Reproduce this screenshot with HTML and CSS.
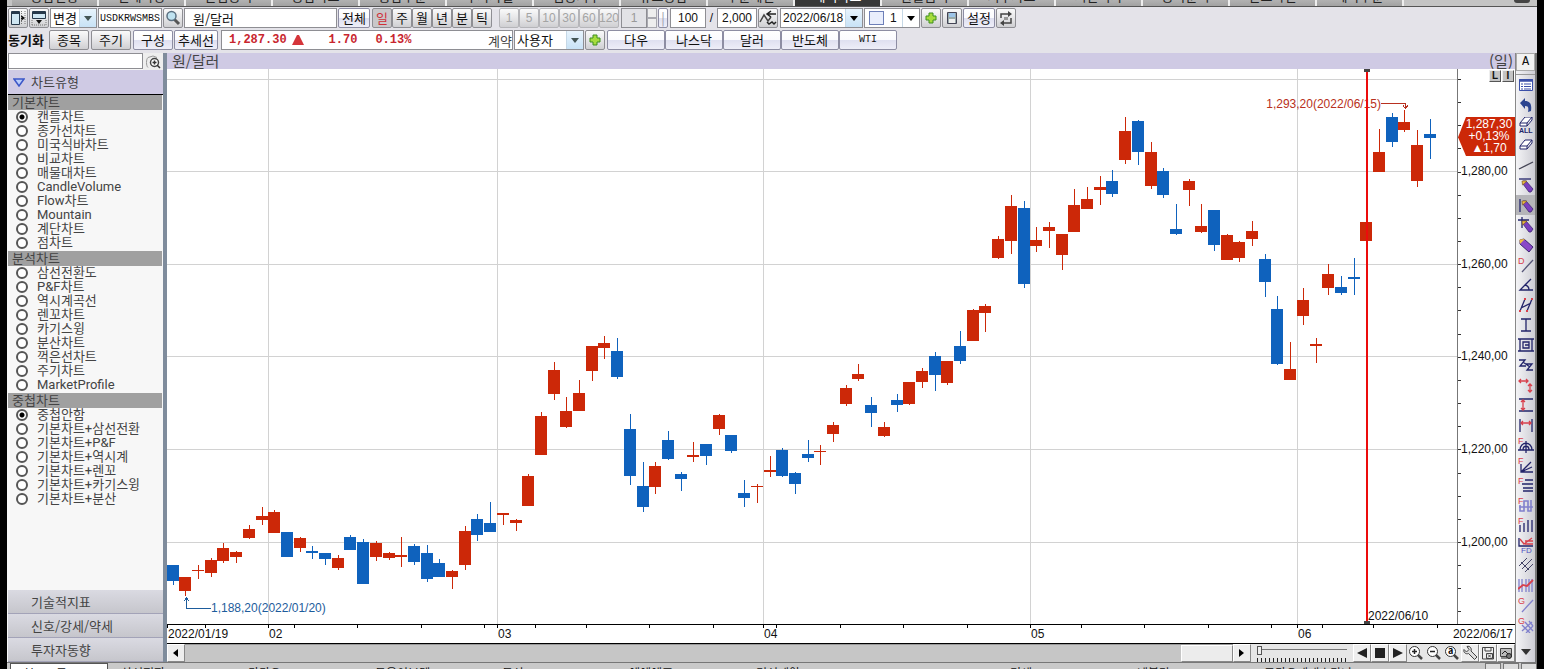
FILE: index.html
```html
<!DOCTYPE html>
<html lang="ko">
<head>
<meta charset="utf-8">
<title>원/달러 차트</title>
<link rel="stylesheet" href="styles.css">
</head>
<body>
<div class="app">
  <nav class="tabs" aria-label="화면">
    <a href="#">종합현황</a><a href="#">현재가창</a><a href="#">관심종목</a><a href="#">종합차트</a><a href="#">통합주문</a><a href="#">투자자별</a><a href="#">업종지수</a><a href="#">뉴스종합</a><a href="#">주문체결</a><a href="#" class="on">해외차트</a><a href="#">환율금리</a><a href="#">지수차트</a><a href="#">시간외가</a><a href="#">종목분석</a><a href="#">잔고확인</a><a href="#">예약주문</a><span class="winbtn"></span>
  </nav>

  <header class="toolbar">
    <div class="row">
      <button class="btn sq" aria-label="왼쪽 패널"><svg width="16" height="16" viewBox="0 0 16 16"><path d="M1.5 1.5h8v13h-8z" fill="#cfe6f2" stroke="#26384a"/><path d="M2 3h7" stroke="#26384a" stroke-width="2"/><path d="M11 5l4 3-4 3z" fill="#111"/><path d="M11.500 1v14M15 1v14" stroke="#777" stroke-dasharray="1 1"/></svg></button>
      <button class="btn sq" aria-label="아래 패널"><svg width="16" height="16" viewBox="0 0 16 16"><path d="M1.500 1.500h13v7h-13z" fill="#cfe6f2" stroke="#26384a"/><path d="M2 3h12" stroke="#26384a" stroke-width="2"/><path d="M5 10h6l-3 4z" fill="#111"/><path d="M1 15h14M1 10v5M15 10v5" stroke="#777" stroke-dasharray="1 1"/></svg></button>
      <span class="sel w48"><select aria-label="변경"><option>변경</option></select><span class="arr"></span></span>
      <input class="box code" aria-label="종목코드" value="USDKRWSMBS">
      <button class="btn sq" aria-label="검색"><svg width="16" height="16" viewBox="0 0 16 16"><path d="M9 9l5 5" stroke="#555" stroke-width="3"/><circle cx="6.500" cy="6" r="4.500" fill="#bfe2f0" stroke="#5a6f80" stroke-width="1.500"/></svg></button>
      <input class="box name" aria-label="종목명" value="원/달러">
      <button class="btn lav w32">전체</button>
      <span class="group g"><button class="btn on">일</button><button class="btn">주</button><button class="btn">월</button><button class="btn">년</button><button class="btn">분</button><button class="btn">틱</button></span>
      <span class="group off"><button class="btn" disabled>1</button><button class="btn" disabled>5</button><button class="btn" disabled>10</button><button class="btn" disabled>30</button><button class="btn" disabled>60</button><button class="btn" disabled>120</button><input class="box spin" aria-label="간격" value="1" disabled><span class="updown"><i></i><i></i></span></span>
      <button class="btn lav tiny" disabled>|</button>
      <input class="box w36" aria-label="표시 개수" value="100">
      <span class="slash">/</span>
      <input class="box w40" aria-label="전체 개수" value="2,000">
      <button class="btn sq move" aria-label="차트 이동"><svg width="18" height="16" viewBox="0 0 18 16"><path d="M1 12l4-7 4 6 3-4" fill="none" stroke="#444" stroke-width="1.500"/><path d="M17 4H9M12 1L8 4l4 3M8 12l2 2 3-2 2 2 2-2" fill="none" stroke="#222" stroke-width="1.500"/></svg></button>
      <span class="sel w84"><select aria-label="날짜"><option>2022/06/18</option></select><span class="arr k"></span></span>
      <span class="sel w56"><span class="chip"></span><select aria-label="창 번호"><option>1</option></select><span class="arr k plain"></span></span>
      <button class="btn sq" aria-label="추가"><svg width="14" height="14" viewBox="0 0 14 14"><path d="M5 2h4v3h3v4H9v3H5V9H2V5h3z" fill="#a6dc3c" stroke="#3f8f1e"/></svg></button>
      <button class="btn sq" aria-label="저장"><svg width="14" height="14" viewBox="0 0 14 14"><path d="M2.500 1.500h9v11h-9z" fill="#9aa" stroke="#445"/><path d="M4 2h6v4H4z" fill="#9cc4e8"/><path d="M4 8h6v4H4z" fill="#eee"/></svg></button>
      <button class="btn lav w32">설정</button>
      <button class="btn sq" aria-label="새로고침"><svg width="16" height="16" viewBox="0 0 16 16"><path d="M3 8V4h8M13 8v5H5" fill="none" stroke="#444" stroke-width="1.500"/><path d="M10 1l4 3-4 3zM6 10l-4 3 4 3z" fill="#444"/><path d="M6 7h4v3H6z" fill="#999"/></svg></button>
    </div>
    <div class="row">
      <b class="sync">동기화</b>
      <button class="btn w40 gray">종목</button>
      <button class="btn w40 gray">주기</button>
      <button class="btn lav w40">구성</button>
      <button class="btn lav w44">추세선</button>
      <div class="quote"><b>1,287.30</b><i class="up"></i><b class="q2">1.70</b><b class="q3">0.13%</b><span>계약</span></div>
      <span class="sel w70"><select aria-label="사용자"><option>사용자</option></select><span class="arr"></span></span>
      <button class="btn sq" aria-label="계약 추가"><svg width="14" height="14" viewBox="0 0 14 14"><path d="M5 2h4v3h3v4H9v3H5V9H2V5h3z" fill="#a6dc3c" stroke="#3f8f1e"/></svg></button>
      <span class="group links"><button class="btn lav">다우</button><button class="btn lav">나스닥</button><button class="btn lav">달러</button><button class="btn lav">반도체</button><button class="btn lav code">WTI</button></span>
    </div>
  </header>

  <main class="main">
    <aside class="side">
      <div class="find"><input class="box" aria-label="지표 찾기"><button aria-label="찾기"><svg width="16" height="14" viewBox="0 0 16 14"><path d="M3 12.500C1 11 1 4 3 2.500L8 1l4 1.500" fill="none" stroke="#999"/><circle cx="9.500" cy="7.500" r="4" fill="#fff" stroke="#444" stroke-width="1.500"/><path d="M7.500 7.500h4M9.500 5.500v4M12 10l3 3" stroke="#333" stroke-width="1.500"/></svg></button></div>
      <h2 class="sec"><svg width="12" height="9" viewBox="0 0 12 9"><path d="M1 1h10L6 8z" fill="#b9cdfa" stroke="#3c57c8" stroke-width="1.500"/></svg>차트유형</h2>
      <div class="lists">
        <h3>기본차트</h3>
        <label><input type="radio" name="a" checked>캔들차트</label>
        <label><input type="radio" name="a">종가선차트</label>
        <label><input type="radio" name="a">미국식바차트</label>
        <label><input type="radio" name="a">비교차트</label>
        <label><input type="radio" name="a">매물대차트</label>
        <label><input type="radio" name="a">CandleVolume</label>
        <label><input type="radio" name="a">Flow차트</label>
        <label><input type="radio" name="a">Mountain</label>
        <label><input type="radio" name="a">계단차트</label>
        <label><input type="radio" name="a">점차트</label>
        <h3>분석차트</h3>
        <label><input type="radio" name="a">삼선전환도</label>
        <label><input type="radio" name="a">P&amp;F차트</label>
        <label><input type="radio" name="a">역시계곡선</label>
        <label><input type="radio" name="a">렌꼬차트</label>
        <label><input type="radio" name="a">카기스윙</label>
        <label><input type="radio" name="a">분산차트</label>
        <label><input type="radio" name="a">꺽은선차트</label>
        <label><input type="radio" name="a">주기차트</label>
        <label><input type="radio" name="a">MarketProfile</label>
        <h3>중첩차트</h3>
        <label><input type="radio" name="b" checked>중첩안함</label>
        <label><input type="radio" name="b">기본차트+삼선전환</label>
        <label><input type="radio" name="b">기본차트+P&amp;F</label>
        <label><input type="radio" name="b">기본차트+역시계</label>
        <label><input type="radio" name="b">기본차트+렌꼬</label>
        <label><input type="radio" name="b">기본차트+카기스윙</label>
        <label><input type="radio" name="b">기본차트+분산</label>
      </div>
      <button class="acc">기술적지표</button>
      <button class="acc">신호/강세/약세</button>
      <button class="acc">투자자동향</button>
    </aside>

    <section class="work">
      <div class="title"><span>원/달러</span><span>(일)</span></div>
      <div class="chart">
        <div class="plot" id="plot">
          <svg id="candles" width="100%" height="100%" viewBox="167 69 1290 555" preserveAspectRatio="none" shape-rendering="crispEdges"></svg>
        </div>
        <div class="price" id="price">
          <div class="li"><button>L</button><button>I</button></div>
          <div class="flag" id="flag"><span>1,287,30</span><span>+0,13%</span><span>▲1,70</span></div>
        </div>
      </div>
      <div class="dates" id="dates"><span class="last">2022/06/17</span></div>
      <div class="scroll">
        <button class="sb" aria-label="이전"><svg width="6" height="8"><path d="M5 0v8L0 4z"/></svg></button>
        <div class="track"><div class="thumb"></div></div>
        <button class="sb" aria-label="다음"><svg width="6" height="8"><path d="M0 0v8l5-4z"/></svg></button>
        <div class="zoomer"><input type="range" aria-label="확대" value="0" min="0" max="100"><div class="marks"></div></div>
        <button class="sb" aria-label="뒤로"><svg width="12" height="12"><path d="M11 1v10L1 6z" fill="#222"/></svg></button>
        <button class="sb" aria-label="정지"><svg width="12" height="12"><path d="M1 1h10v10H1z" fill="#222"/></svg></button>
        <button class="sb" aria-label="재생"><svg width="12" height="12"><path d="M1 1v10l10-5z" fill="#222"/></svg></button>
        <button class="fl" aria-label="확대"><svg width="16" height="16" viewBox="0 0 16 16"><circle cx="6.500" cy="6.500" r="5" fill="#fff" stroke="#333"/><path d="M4 6.500h5M6.500 4v5" stroke="#222" stroke-width="1.500"/><path d="M10 10l4 4" stroke="#444" stroke-width="2.500"/></svg></button>
        <button class="fl" aria-label="축소"><svg width="16" height="16" viewBox="0 0 16 16"><circle cx="6.500" cy="6.500" r="5" fill="#fff" stroke="#333"/><path d="M4 6.500h5" stroke="#222" stroke-width="1.500"/><path d="M10 10l4 4" stroke="#444" stroke-width="2.500"/></svg></button>
        <button class="fl" aria-label="자동"><svg width="16" height="16" viewBox="0 0 16 16"><circle cx="6.500" cy="6.500" r="5" fill="#fff" stroke="#333"/><text x="4" y="9" font-size="9" font-weight="700">a</text><path d="M10 10l4 4" stroke="#444" stroke-width="2.500"/></svg></button>
        <button class="sb" aria-label="도구"><svg width="16" height="16" viewBox="0 0 16 16"><path d="M5 1.500c3-1 5 2 4 4.500l6 6-2.500 2.500-6-6C4 9.500 1 7.500 2 4.500L4.500 7l2.500-2.500z" fill="#ddd" stroke="#444"/></svg></button>
        <button class="sb" aria-label="저장"><svg width="14" height="14" viewBox="0 0 14 14"><path d="M1.500 13V1.500h11V13zM4 2v3h6V2M5.500 7.500h6v5h-6zM7 8.500l3 3M10 8.500l-3 3" fill="none" stroke="#444"/></svg></button>
        <button class="sb" aria-label="인쇄"><svg width="14" height="14" viewBox="0 0 14 14"><path d="M1.500 2.500h11v8h-11z" fill="#bbb" stroke="#444"/><path d="M3 8l3-3 3 3M2 12h6" stroke="#222" fill="none"/><circle cx="10" cy="10" r="2.500" fill="#777" stroke="#222"/></svg></button>
      </div>
    </section>

    <aside class="tools">
      <button class="a">A</button>
      <div class="strip" id="strip"></div>
      <button class="more" aria-label="더보기"><svg width="10" height="6"><path d="M0 0h10L5 6z" fill="#333"/></svg></button>
    </aside>
  </main>

  <footer class="foot">
    <span class="fsel">현종목록</span>
    <a href="#">삼성전자</a><a href="#">카카오</a><a href="#">두올이브텍</a><a href="#">두산</a><a href="#">에에에프</a><a href="#">경신제약</a><a href="#">88</a><a href="#">기세</a><a href="#">넥블라</a><a href="#">코카오게대호타나</a>
    <span class="fend"><i></i><i></i><i></i></span>
  </footer>
</div>
<script src="chart.js"></script>
</body>
</html>
```
FILE: styles.css
```css
* { box-sizing: border-box; }
html, body { height: 100%; }
body { margin: 0; padding: 0 7px; background: #000; overflow: hidden; color: #111;
  font: 13px/16px "Noto Sans CJK KR", sans-serif; }
button, input, select { font: inherit; color: inherit; margin: 0; padding: 0; border-radius: 0; }
a { color: inherit; text-decoration: none; }
svg { display: block; flex: none; }
.app { height: 100%; display: flex; flex-direction: column; background: #e4e3e9; }

.tabs { height: 7px; flex: none; display: flex; align-items: flex-end; overflow: hidden; background: #c4c4c4; border-bottom: 1px solid #555; padding-left: 5px; }
.tabs a { width: 87px; flex: none; height: 16px; line-height: 12px; text-align: center; color: #222; background: linear-gradient(#ccc, #a2a2a2); border-right: 2px solid #eee; }
.tabs a.on { background: #383838; color: #fff; }
.winbtn { width: 16px; height: 12px; margin: 0 7px 3px auto; background: #444; border-radius: 3px; }

.toolbar { flex: none; height: 46px; padding: 1px 0 2px 1px; display: flex; flex-direction: column; gap: 2px; }
.row { display: flex; gap: 1px; height: 20px; align-items: stretch; white-space: nowrap; }
.btn { height: 20px; border: 1px solid #8e8e93; border-radius: 2px; background: linear-gradient(#fafafa, #e6e6e8 50%, #cfcfd2); display: flex; align-items: center; justify-content: center; flex: none; line-height: 18px; }
.btn.lav { background: linear-gradient(#fff, #fbfbfe 50%, #dfe0f0 51%, #eeeef8); border-color: #8d8da3; }
.sq { width: 20px; }
.move { margin-right: 1px; }
.gray { margin-right: 1px; }
.box { border: 1px solid #8e8e93; background: #fff; height: 20px; padding: 0 3px; min-width: 0; }
.row .box { flex: none; font-family: "Liberation Sans", "Noto Sans CJK KR", sans-serif; font-size: 12px; }
.row .code { font-family: "Liberation Mono", monospace; font-size: 10px; }
.row .box.code { width: 64px; padding: 0 1px; }
.row .box.name { width: 153px; padding-left: 8px; font: 13px "Noto Sans CJK KR", sans-serif; }
.w32 { width: 32px; }
.w36 { width: 36px; text-align: center; }
.w40 { width: 40px; text-align: center; }
.w44 { width: 44px; }
.w48 { width: 47px; }
.w56 { width: 56px; }
.w70 { width: 70px; }
.w84 { width: 83px; }
.sel { display: flex; flex: none; height: 20px; background: #fff; border: 1px solid #8e8e93; align-items: center; }
.sel select { appearance: none; border: 0; background: none; flex: 1; min-width: 0; height: 18px; padding-left: 2px; }
.w84 select { font: 12px "Liberation Sans", sans-serif; }
.w56 select { font: 12px "Liberation Sans", sans-serif; padding-left: 6px; }
.arr { width: 17px; height: 18px; flex: none; background: linear-gradient(#e8f4fd, #c8e2f6); display: grid; place-items: center; border-left: 1px solid #c6d8e6; }
.arr::before { content: ""; border: 4px solid transparent; border-top: 5px solid #455; border-bottom: 0; }
.arr.k::before { border-top-color: #000; }
.arr.plain { background: #fff; }
.chip { width: 15px; height: 14px; margin-left: 4px; border: 1px solid #6d7fb8; background: #e9eefc; flex: none; }
.group { display: flex; flex: none; }
.g { margin-left: 1px; }
.g .btn { width: 20px; }
.g .on { background: #c9c7c9; color: #d03038; }
.off { margin-left: 6px; }
.off .btn { width: 20px; font: 12px "Liberation Sans", sans-serif; color: #a4a4a4; border-color: #b5b5b9; }
.row .spin { width: 26px; background: #e2e2e6; color: #999; text-align: center; margin-left: 2px; }
.updown { width: 10px; display: flex; flex-direction: column; }
.updown i { flex: 1; border: 1px solid #a9a9b0; background: #eee; }
.btn.tiny { width: 10px; color: #99a; margin-right: 1px; }
.slash { width: 9px; text-align: center; font: 12px/20px "Liberation Sans", sans-serif; }
.sync { width: 40px; line-height: 20px; }
.quote { width: 292px; margin-left: 2px; flex: none; display: flex; align-items: center; background: #fff; border: 1px solid #8e8e93; padding-left: 7px; color: #c8262e; font: 12px "Liberation Mono", monospace; }
.up { width: 12px; margin-left: 5px; border: 5px solid transparent; border-top: 0; border-bottom: 10px solid #d5353a; }
.q2 { margin-left: 25px; }
.q3 { margin-left: 18px; }
.quote span { margin-left: auto; color: #444; font: 13px "Noto Sans CJK KR", sans-serif; }
.links { margin-left: 1px; }
.links .btn { width: 58px; }

.main { flex: 1; min-height: 0; display: flex; }
.side { width: 160px; flex: none; display: flex; flex-direction: column; background: #f7f7f7; border-right: 4px solid #7f8c9c; padding-left: 1px; color: #444; }
.find { display: flex; height: 17px; flex: none; }
.find .box { flex: 1; height: 16px; }
.find button { border: 0; background: #eee; width: 20px; display: grid; place-items: center; }
.sec { margin: 0; height: 25px; flex: none; display: flex; align-items: center; gap: 6px; padding-left: 5px; background: #cfcae4; border-bottom: 1px solid #000; font-size: 13px; font-weight: 400; }
.lists { flex: 1; min-height: 0; overflow: hidden; }
.lists h3 { margin: 0 1px 0 0; height: 15px; line-height: 14px; padding-left: 4px; font-size: 13px; font-weight: 400; background: #a0a0a0; }
.lists label + h3 { margin-top: 1px; }
.lists label { display: flex; align-items: center; gap: 9px; height: 14px; padding-left: 8px; font: 13px/14px Roboto, "Noto Sans CJK KR", sans-serif; }
.lists input { appearance: none; width: 12px; height: 12px; border: 2px solid #555; border-radius: 50%; background: #fff; flex: none; }
.lists input:checked { background: radial-gradient(#000 0 2px, #fff 3px); }
.acc { flex: none; height: 24px; border: 0; border-bottom: 1px solid #a3a3b8; padding-left: 23px; text-align: left; background: linear-gradient(#dadae2, #c6c6cc); }

.work { flex: 1; min-width: 0; display: flex; flex-direction: column; background: #fff; }
.title { height: 16px; flex: none; display: flex; justify-content: space-between; padding: 0 2px 0 5px; background: #cfcae4; font-size: 15px; line-height: 15px; color: #444; }
.chart { flex: 1; min-height: 0; display: flex; }
.plot { flex: 1; min-width: 0; position: relative; border-right: 1px solid #777; }
.price { width: 57px; flex: none; position: relative; font: 12px/14px "Liberation Sans", sans-serif; }
.tick { position: absolute; left: 0; width: 3px; height: 1px; background: #333; }
.lab { position: absolute; left: 3px; margin-top: -7px; }
.li { display: flex; justify-content: flex-end; padding: 1px 1px 0 0; gap: 1px; }
.li button { width: 12px; height: 12px; border: 1px solid #555; border-top-color: #eee; border-left-color: #eee; background: #c4c4c4; font: bold 10px/10px "Liberation Sans", sans-serif; }
.flag { position: absolute; left: 0; right: 0; height: 39px; margin-top: -20px; padding: 1px 0 0 5px; display: flex; flex-direction: column; align-items: center; line-height: 12px; color: #fff; background: #cc2808; clip-path: polygon(0 52%, 8px 0, 100% 0, 100% 100%, 8px 100%); }
.note { position: absolute; margin-top: -7px; white-space: nowrap; font: 12px/14px "Liberation Sans", sans-serif; }
.note.red { color: #b83020; transform: translateX(-100%); }
.note.blue { color: #1d5c9c; }
.cursor { position: absolute; top: 0; bottom: 0; width: 2px; background: #ec0c0c; }
.cursor::before, .cursor::after { content: ""; position: absolute; left: -2px; width: 6px; height: 3px; background: #444; }
.cursor::after { bottom: 0; }
.dates { height: 20px; flex: none; position: relative; border-top: 1px solid #000; border-bottom: 1px solid #000; font: 12px/14px "Liberation Sans", sans-serif; }
.dates i { position: absolute; top: 0; width: 1px; height: 3px; background: #000; }
.dates span { position: absolute; top: 2px; }
.dates .last { right: 2px; }
.scroll { height: 18px; flex: none; display: flex; background: #e6e6e6; }
.sb, .fl { width: 18px; flex: none; display: grid; place-items: center; border: 1px solid #888; border-top-color: #fff; border-left-color: #fff; background: #eee; }
.fl { border: 0; background: none; }
.track { flex: 1; display: flex; justify-content: flex-end; background: #c6c6c6; border-top: 1px solid #999; }
.thumb { width: 52px; background: #ececec; border: 1px solid #888; border-top-color: #fff; border-left-color: #fff; }
.zoomer { width: 102px; flex: none; padding: 2px 6px 0 6px; display: flex; flex-direction: column; justify-content: space-between; }
.zoomer input { appearance: none; width: 100%; height: 9px; background: linear-gradient(#777, #777) 0 3px / 100% 1px no-repeat; }
.zoomer input::-webkit-slider-thumb { appearance: none; width: 5px; height: 9px; background: #eee; border: 1px solid #555; }
.marks { height: 4px; background: repeating-linear-gradient(90deg, #222 0 1px, transparent 1px 4px); }

.tools { width: 22px; flex: none; border-left: 1px solid #888; border-right: 2px solid #777; background: linear-gradient(90deg, #f4f4f6, #cdcdd4); display: flex; flex-direction: column; }
.tools button { border: 0; background: none; display: grid; place-items: center; flex: none; }
.tools .a { height: 18px; margin-bottom: 3px; border: 1px solid #aaa; background: #f2f2f2; font: 12px "Liberation Mono", monospace; }
.strip { flex: 1; min-height: 0; overflow: hidden; display: flex; flex-direction: column; border-top: 1px solid #999; }
.strip button { height: 20px; }
.strip .on { background: #b5b5b9; }
.tools .more { height: 20px; }

.foot { height: 7px; flex: none; overflow: hidden; display: flex; align-items: flex-start; background: #c9c9c9; border-top: 1px solid #777; padding-left: 3px; color: #111; font-size: 12px; line-height: 20px; }
.fsel { width: 98px; height: 20px; flex: none; margin-right: 13px; padding-left: 12px; border: 1px solid #555; background: #fff; }
.foot a { width: 127px; flex: none; }
.fend { margin-left: auto; display: flex; gap: 2px; }
.fend i { width: 16px; height: 16px; border: 1px solid #777; background: #ddd; }
```
FILE: chart.js
```js
// One row per session: direction, body top, body bottom, wick top, wick bottom.
const data = `b565,581,565,585 r577,591,577,596 r570,571,565,579 r560,573,558,577 r548,561,543,563 r552,557,551,563 r529,538,525,539 r516,520,507,525 r512,533,510,533 b532,557,532,557
r538,548,537,552 b551,553,546,559 b553,559,553,565 r558,568,555,570 b537,550,535,550 b542,584,539,584 r543,557,541,561 r553,558,552,560 r555,557,537,567 b546,562,544,565
b553,579,545,582 b563,577,559,577 r571,577,570,589 r531,565,526,570 b519,535,514,541 b523,532,502,532 r513,515,513,525 r520,523,519,531 r476,506,474,506 r416,455,412,455
r370,394,362,400 r411,427,397,428 r393,411,380,411 r346,371,346,381 r343,348,336,359 b351,377,338,379 b429,476,414,485 b486,507,462,512 r466,487,462,494 b440,459,431,460
b474,479,472,491 r455,457,442,462 b444,456,444,465 r415,429,414,435 b435,451,435,453 b493,498,480,507 r486,487,484,503 r470,472,456,477 b450,476,448,477 b473,484,472,494
b454,458,440,462 r451,452,445,465 r425,434,422,442 r388,404,385,406 r374,379,364,381 b405,413,397,427 r427,436,422,437 b400,405,394,412 r382,404,382,405 r371,382,368,388
b356,375,352,391 r361,383,361,385 b346,361,331,364 r310,341,309,341 r306,313,304,332 r239,258,236,259 r206,241,195,254 b208,284,201,288 r240,246,227,252 r227,231,222,248
r234,255,234,270 r205,232,189,232 r199,209,187,209 r187,190,176,205 b181,194,170,197 r131,160,117,164 b121,152,120,165 r152,186,142,189 b171,195,168,198 b229,234,204,235
r181,190,179,206 r226,232,204,233 b210,245,210,251 r235,260,234,260 r242,258,241,262 r231,239,221,246 b259,282,254,297 b309,364,296,365 r369,380,342,380 r300,316,288,325
r344,346,338,363 r274,288,264,295 b287,293,276,295 b277,279,258,295 r222,241,222,241 r152,172,129,172 b117,142,113,147 r122,130,110,132 r145,181,130,187 b134,138,119,159`.split(/\s+/);

const X0 = 167, Y0 = 69, W = 1290, H = 555;
const px = x => (x - X0) / W * 100 + '%';
const py = y => (y - Y0) / H * 100 + '%';
const rect = (x, y, w, h, c) => `<rect x="${x}" y="${y}" width="${w}" height="${h}" fill="${c}"/>`;
const months = [[268, '02'], [497, '03'], [763, '04'], [1030, '05'], [1297, '06']];
const prices = [[171, '1,280,00'], [264, '1,260,00'], [356, '1,240,00'], [449, '1,220,00'], [542, '1,200,00']];

let out = rect(X0, 79, W, 1, '#d2d2d2');
prices.forEach(p => out += rect(X0, p[0], W, 1, '#d2d2d2'));
months.forEach(m => out += rect(m[0], Y0, 1, H, '#d2d2d2'));
data.forEach((row, i) => {
  const color = row[0] === 'r' ? '#cc2808' : '#0f62bd';
  const [top, bottom, high, low] = row.slice(1).split(',').map(Number);
  const x = Math.round(172.6 + i * 12.7);
  out += rect(x, high, 1, low - high, color) + rect(x - 6, top, 12, bottom - top, color);
});
out += '<path d="M186.500 598v10H211M184 601l2.500-3 2.500 3" fill="none" stroke="#1d5c9c"/>';
out += '<path d="M1381 103.500h24.500v5M1403 105.500l2.500 3 2.500-3" fill="none" stroke="#b83020"/>';
document.getElementById('candles').innerHTML = out;

document.getElementById('plot').insertAdjacentHTML('beforeend',
  `<span class="note blue" style="left:${px(211)};top:${py(608)}">1,188,20(2022/01/20)</span>
   <span class="note red" style="left:${px(1381)};top:${py(104)}">1,293,20(2022/06/15)</span>
   <span class="note" style="left:${px(1368)};top:${py(616)}">2022/06/10</span>
   <div class="cursor" style="left:${px(1366)}"></div>`);

let axis = '';
for (let k = 0; k < 24; k++) axis += `<i class="tick" style="top:${py(79 + k * 23.15)}"></i>`;
prices.forEach(p => axis += `<span class="lab" style="top:${py(p[0])}">${p[1]}</span>`);
document.getElementById('price').insertAdjacentHTML('beforeend', axis);
document.getElementById('flag').style.top = py(137);

// The date axis is wider than the plot by the price column.
const dx = x => (x - X0) / (W + 58) * 100 + '%';
let dates = `<span style="left:${dx(168)}">2022/01/19</span>`;
[167, 205, 268, 294, 357, 421, 484, 497, 535, 586, 649, 713, 763, 776, 840, 903, 967, 1030, 1081, 1144, 1208, 1271, 1297, 1322, 1373, 1437]
  .forEach(x => dates += `<i style="left:${dx(x)}"></i>`);
months.forEach(m => dates += `<span style="left:${dx(m[0] + 1)}">${m[1]}</span>`);
document.getElementById('dates').insertAdjacentHTML('beforeend', dates);

const N = '#22246a', R = '#d8404c', B = '#8080cc';
const line = (d, c = N, w = 1.3) => `<path d="${d}" fill="none" stroke="${c}" stroke-width="${w}"/>`;
const letter = (t, x = 0, y = 7) => `<text x="${x}" y="${y}" font-size="9" font-family="Liberation Sans" fill="${R}">${t}</text>`;
const pencil = '<path d="M5 4h3l7 8-2 3h-2L5 7z" fill="#7a3fc0" stroke="#3c2470" stroke-width=".8"/><path d="M4 4h5L4.500 8z" fill="#f0c040" stroke="#705020" stroke-width=".6"/>';
const eraser = y => `<path d="M2 ${y + 6}l5-6h7l-5 6zM2 ${y + 6}v3h7v-3M9 ${y + 9}l5-6v-3" fill="#fff" stroke="${N}"/>`;
const icons = [
  ['목록', '<path d="M1.500 2.500h13v11h-13z" fill="#fff" stroke="#3a4fa8"/><path d="M1 3.500h14" stroke="#3a4fa8" stroke-width="2.500"/>' + line('M3 7h2M6 7h7M3 9.500h2M6 9.500h7M3 12h2M6 12h7', '#3a4fa8', 1)],
  ['되돌리기', '<path d="M2 6l5-5v3c5 0 7 3 6 10l-3 1c1-5 0-6-3-6v3z" fill="#2c4590"/>'],
  ['전체 지우기', eraser(0) + `<text x="1" y="16" font-size="7" font-weight="700" font-family="Liberation Sans" fill="${N}">ALL</text>`],
  ['지우기', eraser(3)],
  ['추세선', line('M1 12L15 5', '#445')],
  ['수평선', line('M1 2h12') + pencil],
  ['수직선', line('M2 2v13') + pencil],
  ['십자선', line('M4 0v11M0 3h11') + pencil],
  ['색연필', '<path d="M2 3l4-1 9 8-4 5-9-8z" fill="#8a48c8" stroke="#3c2470"/><path d="M1.500 2.500L7 2 2 7z" fill="#f0c040"/>'],
  ['D선', letter('D') + line('M4 15L15 3', '#557')],
  ['각도', line('M13 2L2 13h13M7 8q4 1 4 5')],
  ['채널', line('M2 14L7 2M9 14l5-12M3 11l10-5') + line('M1 14h2M6 2h2M8 14h2M13 2h2', R, 2)],
  ['구간', line('M3 2h10M8 2v12M3 14h10')],
  ['사각', line('M2 2v12M14 2v12M0 2h16M0 14h16M5 5h6v6H5zM7 8h4')],
  ['지그재그', line('M1 3h6l-5 6h6M8 7h6l-5 6h6M5 5l7 5')],
  ['이동', line('M1 4h9M3 2L1 4l2 2M8 2l2 2-2 2M12 7v8M10 9l2-2 2 2M10 13l2 2 2-2', R)],
  ['가격폭', line('M1 2h14M1 14h14') + line('M5 3v10M3 5l2-2 2 2M3 11l2 2 2-2', R)],
  ['기간폭', line('M2 2v13M14 2v13') + line('M3 6h10M5 4L3 6l2 2M11 4l2 2-2 2', R)],
  ['피보 원', letter('F') + line('M2 13c0-9 12-9 12 0M5 13c0-5 6-5 6 0M8 4v12M0 13h16')],
  ['피보 팬', letter('F') + line('M3 7v8h12M3 15L13 5M3 15l11-5')],
  ['피보 되돌림', letter('F') + line('M7 3h8M4 7h11M5 11h10M5 14h10', N, 1.4)],
  ['피보 파동', letter('F') + line('M2 8v6h4V4h4v10h3V3M1 10h14', B, 1.6)],
  ['피보 시간', letter('F') + line('M2 8v7M6 6v9M10 3v12M14 3v12')],
  ['피보 FD', line('M1 1v8h14') + line('M2 2l4 5 8-6M7 4h8M7 7h8', R) + `<text x="3" y="16" font-size="8" font-family="Liberation Sans" fill="#5050c0">FD</text>`],
  ['평행선', line('M1 9L9 1M4 12L14 2M7 15l8-8M3 5l8 8', '#446', 1)],
  ['회귀', line('M1 2v13M4 2v13M8 2v13M11 2v13M14 2v13', B) + line('M0 12l5-4 4 1 6-6', R, 1.8)],
  ['갠선', letter('G') + line('M4 15L15 3', B)],
  ['갠격자', letter('G') + line('M4 8l8 8M7 5l8 9M11 4l4 5M4 14L14 5M8 16l7-7', B)]
];
document.getElementById('strip').innerHTML = icons.map(([name, art], i) =>
  `<button aria-label="${name}"${i === 6 ? ' class="on"' : ''}><svg width="16" height="16" viewBox="0 0 16 16">${art}</svg></button>`).join('');
```
